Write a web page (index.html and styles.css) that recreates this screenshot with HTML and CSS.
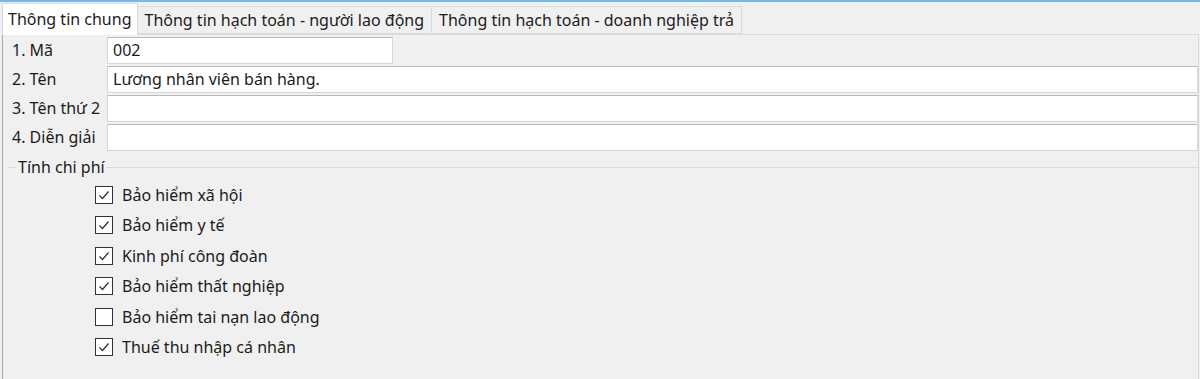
FILE: index.html
```html
<!DOCTYPE html>
<html lang="vi">
<head>
<meta charset="utf-8">
<title>Thông tin chung</title>
<link rel="stylesheet" href="styles.css">
</head>
<body>
<div class="top-line"></div>
<div class="tabs">
  <div class="tab active">Thông tin chung</div>
  <div class="tab">Thông tin hạch toán - người lao động</div>
  <div class="tab">Thông tin hạch toán - doanh nghiệp trả</div>
</div>
<div class="page">
  <div class="form">
    <div class="label">1. Mã</div>
    <div class="input short">002</div>
    <div class="label">2. Tên</div>
    <div class="input">Lương nhân viên bán hàng.</div>
    <div class="label">3. Tên thứ 2</div>
    <div class="input"></div>
    <div class="label">4. Diễn giải</div>
    <div class="input"></div>
  </div>
  <fieldset class="group">
    <legend>Tính chi phí</legend>
    <div class="checks">
      <div class="check"><span class="box on"><svg viewBox="0 0 16 16"><polyline points="3.5,8.5 6.5,11.5 12.5,4.5"/></svg></span>Bảo hiểm xã hội</div>
      <div class="check"><span class="box on"><svg viewBox="0 0 16 16"><polyline points="3.5,8.5 6.5,11.5 12.5,4.5"/></svg></span>Bảo hiểm y tế</div>
      <div class="check"><span class="box on"><svg viewBox="0 0 16 16"><polyline points="3.5,8.5 6.5,11.5 12.5,4.5"/></svg></span>Kinh phí công đoàn</div>
      <div class="check"><span class="box on"><svg viewBox="0 0 16 16"><polyline points="3.5,8.5 6.5,11.5 12.5,4.5"/></svg></span>Bảo hiểm thất nghiệp</div>
      <div class="check"><span class="box"></span>Bảo hiểm tai nạn lao động</div>
      <div class="check"><span class="box on"><svg viewBox="0 0 16 16"><polyline points="3.5,8.5 6.5,11.5 12.5,4.5"/></svg></span>Thuế thu nhập cá nhân</div>
    </div>
  </fieldset>
</div>
</body>
</html>
```
FILE: styles.css
```css
* { box-sizing: border-box; }
html, body {
  margin: 0;
  height: 100%;
  background: #f0f0f0;
  font-family: "Noto Sans", "Open Sans", sans-serif;
  font-size: 16px;
  color: #1b1b1b;
  overflow: hidden;
}
.top-line {
  height: 2px;
  background: #74b8e4;
}
.tabs {
  display: flex;
  align-items: flex-end;
  height: 32px;
  padding-left: 2px;
  position: relative;
  z-index: 1;
}
.tab {
  height: 28px;
  line-height: 26px;
  padding: 0 7px;
  background: #f0f0f0;
  border: 1px solid #dadada;
  border-left: none;
  white-space: nowrap;
}
.tab.active {
  height: 32px;
  line-height: 30px;
  background: #ffffff;
  border: 1px solid #dadada;
  border-bottom: none;
  padding: 0 5px;
  margin-bottom: -1px;
}
.page {
  border-top: 1px solid #dadada;
  border-left: 1px solid #a9a9a9;
  border-right: 1px solid #dadada;
  margin-left: 2px;
  margin-right: 1px;
  height: calc(100% - 34px);
  padding-top: 2px;
}
.form {
  display: grid;
  grid-template-columns: 104px 1fr;
  row-gap: 2px;
}
.label {
  height: 27px;
  line-height: 27px;
  padding-left: 9px;
  white-space: nowrap;
}
.input {
  height: 27px;
  line-height: 25px;
  background: #fff;
  border: 1px solid #d6d6d6;
  border-top-color: #b9b9b9;
  padding-left: 5px;
  white-space: nowrap;
}
.input.short { width: 286px; }
.group {
  margin: 6px 0 0 5px;
  border: none;
  border-top: 1px solid #dcdcdc;
  padding: 0;
  min-width: 0;
}
legend {
  padding: 0 2px;
  margin-left: 8px;
  line-height: 20px;
}
.checks {
  display: flex;
  flex-direction: column;
  padding-left: 87px;
  padding-top: 7px;
  row-gap: 9.6px;
}
.check {
  display: flex;
  align-items: center;
  height: 21px;
  white-space: nowrap;
}
.box {
  width: 18px;
  height: 18px;
  border: 1px solid #333;
  background: #fff;
  margin-right: 9px;
  display: flex;
}
.box svg {
  width: 16px;
  height: 16px;
  fill: none;
  stroke: #333;
  stroke-width: 1.3;
}
```
